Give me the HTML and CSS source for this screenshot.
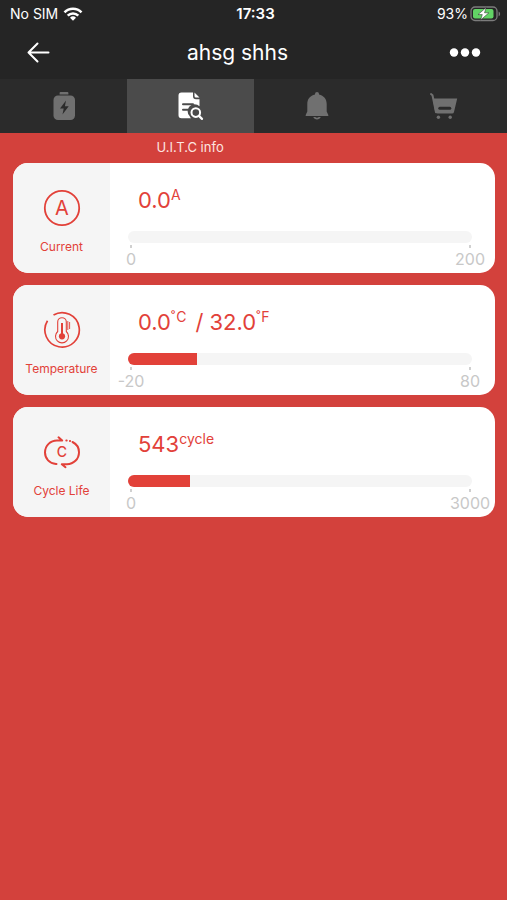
FILE: index.html
```html
<!DOCTYPE html>
<html lang="en">
<head>
<meta charset="utf-8">
<meta name="viewport" content="width=device-width, initial-scale=1">
<title>U.I.T.C info</title>
<link rel="stylesheet" href="styles.css">
</head>
<body>
<div class="status">
  <div class="status-side status-start">
    <span>No SIM</span>
    <svg width="20" height="14" viewBox="0 0 20 14" fill="none" stroke="#fff" stroke-width="2.6">
      <path d="M1.500 5.300a12 12 0 0 1 17 0"/>
      <path d="M4.700 8.700a7.500 7.500 0 0 1 10.600 0"/>
      <path d="M10 13.800L7 10.700a4.300 4.300 0 0 1 6 0z" fill="#fff" stroke="none"/>
    </svg>
  </div>
  <time class="clock">17:33</time>
  <div class="status-side status-end">
    <span>93%</span>
    <svg width="31" height="16" viewBox="0 0 31 16">
      <rect x="1" y="1" width="26" height="13.500" rx="4" fill="none" stroke="#7c7c7c" stroke-width="1.300"/>
      <path d="M28.600 5.400c2 .8 2 4 0 4.800z" fill="#7c7c7c"/>
      <rect x="3" y="3" width="20.500" height="9.500" rx="2" fill="#62d465"/>
      <path d="M16.200 1.500L8 8.600h4.300L10.600 14l8.300-7.200h-4.400z" fill="#fff" stroke="#252525" stroke-width=".5"/>
    </svg>
  </div>
</div>

<header class="header">
  <button class="icon-button" type="button" aria-label="Back">
    <svg width="24" height="22" viewBox="0 0 24 22" fill="none" stroke="#fff" stroke-width="2" stroke-linecap="round" stroke-linejoin="round"><path d="M22.500 10.500H2.500M11.500 1.500l-9 9 9 9"/></svg>
  </button>
  <h1 class="title">ahsg shhs</h1>
  <button class="icon-button icon-end" type="button" aria-label="More">
    <svg width="32" height="10" viewBox="0 0 32 10" fill="#fff"><circle cx="5" cy="4.500" r="4.200"/><circle cx="16" cy="4.500" r="4.200"/><circle cx="27" cy="4.500" r="4.200"/></svg>
  </button>
</header>

<nav class="tabs">
  <a class="tab" href="#battery" aria-label="Battery">
    <svg width="30" height="30" viewBox="0 0 30 30"><path d="M12.500 1h7a.9.9 0 0 1 .9.900V3.500h-8.800V1.900a.9.9 0 0 1 .9-.9z" fill="#707070"/><rect x="5.500" y="4.500" width="21.500" height="24.500" rx="4.500" fill="#707070"/><path d="M18 9.500l-6 8h3.700L14.500 23.500l6.200-8.200h-3.800z" fill="#2b2b2b"/></svg>
  </a>
  <a class="tab tab-active" href="#info" aria-label="Info" aria-current="page">
    <svg width="30" height="30" viewBox="0 0 30 30"><path d="M6.500 1.500H18v3.800a3 3 0 0 0 3 3h3.500V15.200A6.600 6.600 0 0 0 14.600 25c.3.900.8 1.600 1.400 2.200H6.500a3 3 0 0 1-3-3v-19.700a3 3 0 0 1 3-3z" fill="#fff"/><path d="M19.500 1.600l5 5h-3.500a1.500 1.500 0 0 1-1.500-1.500z" fill="#fff"/><path d="M8 13.200h10M8 18.800h5.500" stroke="#4b4b4b" stroke-width="2" stroke-linecap="round"/><circle cx="20.800" cy="21.600" r="4.300" fill="#4b4b4b" stroke="#fff" stroke-width="2"/><path d="M24 24.900l3 3" stroke="#fff" stroke-width="2.200" stroke-linecap="round"/></svg>
  </a>
  <a class="tab" href="#alarm" aria-label="Alarm">
    <svg width="30" height="30" viewBox="0 0 30 30" fill="#707070"><path d="M15 1a2 2 0 0 1 2 2v.5c4.700 1 7.700 4.500 7.700 9.500v7.500l1.600 3.400v1.100H3.700v-1.100l1.600-3.400V13c0-5 3-8.500 7.700-9.500V3a2 2 0 0 1 2-2z"/><path d="M11.300 26h2c.6 1 2.800 1 3.400 0h2c-.8 3.300-6.600 3.300-7.400 0z"/></svg>
  </a>
  <a class="tab" href="#shop" aria-label="Shop">
    <svg width="30" height="30" viewBox="0 0 30 30"><path d="M2 3l1.500 1.200L7 21.300" fill="none" stroke="#707070" stroke-width="2" stroke-linecap="round"/><path d="M3.800 7.500h24.400L25 21a2 2 0 0 1-2 1.600H8.500a2.500 2.500 0 0 1-2.400-2z" fill="#707070"/><path d="M10.800 17.300h10" stroke="#2b2b2b" stroke-width="3" stroke-linecap="round"/><circle cx="9.400" cy="26.300" r="1.700" fill="#707070"/><circle cx="21.200" cy="26.300" r="1.700" fill="#707070"/></svg>
  </a>
  <span class="tab-label">U.I.T.C info</span>
</nav>

<main class="cards">
  <section class="card">
    <div class="card-side">
      <svg width="38" height="38" viewBox="0 0 38 38"><circle cx="19" cy="19" r="17.200" fill="none" stroke="#e24139" stroke-width="1.800"/><text class="letter letter-large" x="19" y="26">A</text></svg>
      <h2 class="name">Current</h2>
    </div>
    <div class="card-body">
      <p class="value">0.0<span class="unit">A</span></p>
      <div class="track"></div>
      <div class="scale"><span class="mark">0</span><span class="mark">200</span></div>
    </div>
  </section>

  <section class="card">
    <div class="card-side">
      <svg width="38" height="38" viewBox="0 0 38 38" fill="none" stroke="#e24139"><path d="M10.500 4A17.200 17.200 0 1 1 4.500 9.800" stroke-width="1.700"/><path d="M14.700 20.500V11a4.300 4.300 0 0 1 8.600 0v9.500a6.500 6.500 0 1 1-8.600 0z" stroke-width="1.100"/><path d="M19 12v12" stroke-width="2"/><circle cx="19" cy="25.300" r="3.100" fill="#e24139" stroke="none"/><path d="M24.800 10v9M26.600 11v7" stroke-width=".9"/></svg>
      <h2 class="name">Temperature</h2>
    </div>
    <div class="card-body">
      <p class="value">0.0<span class="unit"><span class="degree">˚</span>C</span> <span class="second">/ 32.0</span><span class="unit"><span class="degree">˚</span>F</span></p>
      <div class="track"><div class="fill" style="width:20%"></div></div>
      <div class="scale"><span class="mark">-20</span><span class="mark">80</span></div>
    </div>
  </section>

  <section class="card">
    <div class="card-side">
      <svg width="38" height="38" viewBox="0 0 38 38"><g fill="none" stroke="#e24139" stroke-width="2" stroke-linecap="round" stroke-linejoin="round"><path d="M13.500 31H13C6.500 30.500 2 25.500 2 19.500 2 12.500 7.500 7.500 14 7.500h5.200L15.500 4.300"/><path d="M29.500 9c4 2 6.500 5.800 6.500 10.300 0 6.900-5.500 11.900-12 11.900h-5.200l3.700 3"/><path d="M23.300 7.600h.4M26.900 7.900h.2"/></g><text class="letter" x="19" y="24">C</text></svg>
      <h2 class="name">Cycle Life</h2>
    </div>
    <div class="card-body">
      <p class="value">543<span class="unit">cycle</span></p>
      <div class="track"><div class="fill" style="width:18.1%"></div></div>
      <div class="scale"><span class="mark">0</span><span class="mark">3000</span></div>
    </div>
  </section>
</main>
</body>
</html>
```
FILE: styles.css
```css
* {
  box-sizing: border-box;
}

body {
  margin: 0;
  min-height: 100vh;
  background: #d3413c;
  color: #fff;
  font-family: Inter, "Liberation Sans", sans-serif;
}

h1,
h2,
p {
  margin: 0;
  font-weight: 400;
}

svg {
  display: block;
  flex: none;
}

.status {
  display: flex;
  align-items: center;
  height: 27px;
  padding: 0 6px;
  background: #252525;
  font-size: 14px;
  line-height: 20px;
}

.status-side {
  display: flex;
  flex: 1 1 0;
  align-items: center;
}

.status-start {
  gap: 5px;
  padding-left: 4px;
}

.status-end {
  justify-content: flex-end;
  gap: 2px;
}

.clock {
  font-size: 15px;
  font-weight: 600;
}

.header {
  display: flex;
  align-items: center;
  height: 52px;
  padding: 0 26px;
  background: #252525;
}

.icon-button {
  display: flex;
  align-items: center;
  width: 48px;
  height: 32px;
  padding: 0;
  border: 0;
  background: none;
}

.icon-end {
  justify-content: flex-end;
}

.title {
  flex: 1;
  padding-right: 32px;
  font-size: 21px;
  line-height: 28px;
  text-align: center;
}

.tabs {
  display: grid;
  grid-template-columns: repeat(4, 1fr);
}

.tab {
  display: flex;
  align-items: center;
  justify-content: center;
  height: 54px;
  background: #2b2b2b;
}

.tab-active {
  background: #4b4b4b;
}

.tab-label {
  grid-column: 2;
  height: 30px;
  color: #fde5e0;
  font-size: 13px;
  line-height: 28px;
  text-align: center;
}

.cards {
  display: grid;
  gap: 12px;
  padding: 0 12px 12px 13px;
}

.card {
  display: flex;
  min-height: 110px;
  overflow: hidden;
  border-radius: 15px;
  background: #fff;
  color: #e24139;
}

.card-side {
  display: flex;
  flex: none;
  flex-direction: column;
  align-items: center;
  gap: 10px;
  width: 97px;
  padding-top: 26px;
  background: #f5f5f5;
}

.letter {
  fill: #e24139;
  font-size: 14px;
  font-weight: 500;
  text-anchor: middle;
}

.letter-large {
  font-size: 20px;
  font-weight: 400;
}

.name {
  font-size: 12px;
  line-height: 20px;
}

.card-body {
  flex: 1;
  padding: 22px 23px 0 18px;
}

.value {
  display: flex;
  align-items: flex-start;
  height: 46px;
  padding-left: 10px;
  font-size: 22px;
  line-height: 30px;
}

.unit {
  font-size: 14px;
  line-height: 20px;
}

.degree {
  padding-right: 1px;
}

.second {
  padding-left: 9px;
}

.track {
  height: 12px;
  overflow: hidden;
  border-radius: 6px;
  background: #f5f5f5;
}

.fill {
  height: 100%;
  background: #e24139;
}

.scale {
  display: flex;
  justify-content: space-between;
  padding: 2px 2px 0 3px;
  color: #c8c8c8;
  font-size: 16px;
  line-height: 22px;
}

.mark {
  display: flex;
  flex-direction: column;
  align-items: center;
  width: 0;
}

.mark::before {
  width: 2px;
  height: 3px;
  background: #d0d0d0;
  content: "";
}
```
